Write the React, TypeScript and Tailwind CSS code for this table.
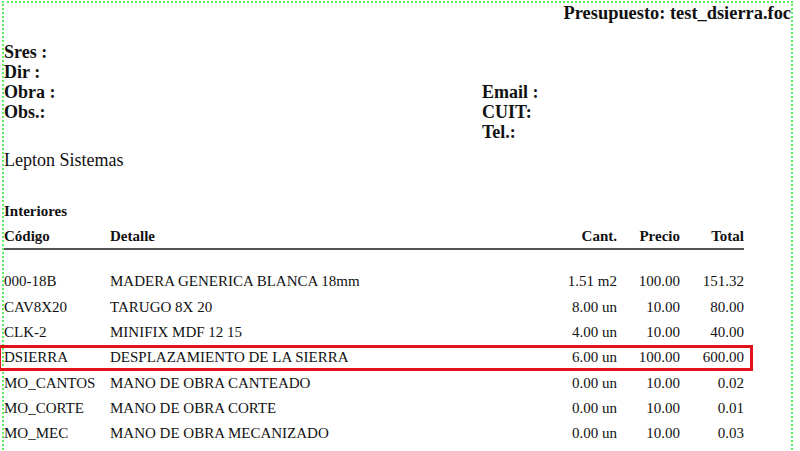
const items = [
  { code: "000-18B", detail: "MADERA GENERICA BLANCA 18mm", qty: "1.51 m2", price: "100.00", total: "151.32" },
  { code: "CAV8X20", detail: "TARUGO 8X 20", qty: "8.00 un", price: "10.00", total: "80.00" },
  { code: "CLK-2", detail: "MINIFIX MDF 12 15", qty: "4.00 un", price: "10.00", total: "40.00" },
  { code: "DSIERRA", detail: "DESPLAZAMIENTO DE LA SIERRA", qty: "6.00 un", price: "100.00", total: "600.00", marked: true },
  { code: "MO_CANTOS", detail: "MANO DE OBRA CANTEADO", qty: "0.00 un", price: "10.00", total: "0.02" },
  { code: "MO_CORTE", detail: "MANO DE OBRA CORTE", qty: "0.00 un", price: "10.00", total: "0.01" },
  { code: "MO_MEC", detail: "MANO DE OBRA MECANIZADO", qty: "0.00 un", price: "10.00", total: "0.03" },
];

const cols = "grid grid-cols-[106px_407px_100px_63px_64px] w-[740px]";

export default function App() {
  return (
    <div className="h-[451px] overflow-hidden bg-white font-[family-name:Liberation_Serif,Times_New_Roman,serif] text-[#111]">
      <div className="ml-[2px] mt-[1px] min-h-[500px] w-[791px] border-2 border-dotted border-[#5def5d]">
        <div className="text-right text-[18.4px] font-bold leading-[20px]">Presupuesto: test_dsierra.foc</div>

        <div className="mt-[19px] grid grid-cols-[478px_1fr] text-[18px] font-bold leading-[20px]">
          <div>
            <div>Sres :</div>
            <div>Dir :</div>
            <div>Obra :</div>
            <div>Obs.:</div>
          </div>
          <div className="pt-[40px]">
            <div>Email :</div>
            <div>CUIT:</div>
            <div>Tel.:</div>
          </div>
        </div>

        <div className="mt-[8px] text-[18px] leading-[20px]">Lepton Sistemas</div>

        <div className="mt-[31px] text-[15px] font-bold leading-[20px]">Interiores</div>

        <div className={`${cols} mt-[5px] border-b-2 border-[#555] pb-[2px] text-[15px] font-bold leading-[20px]`}>
          <div>Código</div>
          <div>Detalle</div>
          <div className="text-right">Cant.</div>
          <div className="text-right">Precio</div>
          <div className="text-right">Total</div>
        </div>

        <div className="mt-[19px] text-[15px]">
          {items.map((it) => (
            <div key={it.code} className={`${cols} relative h-[25.3px] items-center`}>
              {it.marked && (
                <div className="absolute -bottom-[1px] -left-[6px] -right-[9px] top-0 border-[3px] border-[#e3131b]" />
              )}
              <div>{it.code}</div>
              <div>{it.detail}</div>
              <div className="text-right">{it.qty}</div>
              <div className="text-right">{it.price}</div>
              <div className="text-right">{it.total}</div>
            </div>
          ))}
        </div>
      </div>
    </div>
  );
}
